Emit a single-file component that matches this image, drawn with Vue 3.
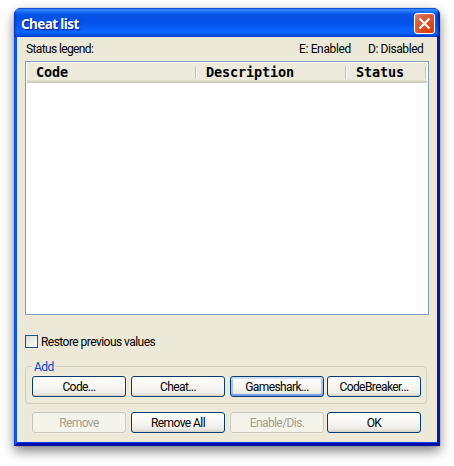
<script setup>
const columns = [
  { name: 'Code', cls: 'c-code' },
  { name: 'Description', cls: 'c-desc' },
  { name: 'Status', cls: 'c-status' },
]
const addButtons = [
  { label: 'Code...' },
  { label: 'Cheat...' },
  { label: 'Gameshark...', focused: true },
  { label: 'CodeBreaker...' },
]
const actions = [
  { label: 'Remove', disabled: true },
  { label: 'Remove All' },
  { label: 'Enable/Dis.', disabled: true },
  { label: 'OK' },
]
</script>

<template>
  <main class="screen">
    <section class="window">
      <header class="titlebar">
        <h1>Cheat list</h1>
        <button class="close" aria-label="Close">
          <svg width="21" height="21" viewBox="0 0 21 21">
            <path d="M5.5 5.5L15.5 15.5M15.5 5.5L5.5 15.5" stroke="#fff" stroke-width="2.2" />
          </svg>
        </button>
      </header>
      <div class="client">
        <div class="legend">
          <span class="l-status">Status legend:</span>
          <span class="l-enabled">E: Enabled</span>
          <span class="l-disabled">D: Disabled</span>
        </div>
        <div class="list">
          <div class="head">
            <span v-for="c in columns" :key="c.name" :class="c.cls">{{ c.name }}</span>
          </div>
        </div>
        <label class="restore">
          <i class="box"></i>
          <span>Restore previous values</span>
        </label>
        <fieldset class="group">
          <legend>Add</legend>
          <div class="row">
            <button v-for="b in addButtons" :key="b.label" class="btn" :class="{ focused: b.focused }">
              {{ b.label }}
            </button>
          </div>
        </fieldset>
        <div class="row actions">
          <button v-for="b in actions" :key="b.label" class="btn" :disabled="b.disabled">
            {{ b.label }}
          </button>
        </div>
      </div>
    </section>
  </main>
</template>

<style>
body {
  background: #fff;
  overflow: hidden;
}
</style>

<style scoped>
* {
  box-sizing: border-box;
}
.screen {
  width: 454px;
  height: 466px;
  padding: 8px 14px;
  overflow: hidden;
  background: #fff;
  font: 12px/14px Roboto, "Liberation Sans", Arial, sans-serif;
  color: #000;
}
.window {
  width: 426px;
  height: 438px;
  border-radius: 7px 7px 0 0;
  overflow: hidden;
  background: #0831d9;
  box-shadow: 0 0 1px rgba(0, 0, 0, 0.5), 0 5px 12px rgba(0, 0, 0, 0.5);
}
.titlebar {
  display: flex;
  justify-content: space-between;
  height: 29px;
  padding: 5px 5px 0 7px;
  background: linear-gradient(#0a48d8 0, #3a90ff 2px, #2478f8 3px, #0b57e8 6px, #0450e4 10px, #0453ee 16px, #0660fc 21px, #0765ff 25px, #0450e0 27px, #0138c8 29px);
  box-shadow: inset 2px 0 2px -1px #0030c0, inset -3px 0 2px -1px #0020a8;
}
h1 {
  margin: 0;
  padding-top: 2px;
  font: bold 13.5px/18px "Noto Sans", "Open Sans", sans-serif;
  letter-spacing: -0.6px;
  color: #fff;
  text-shadow: 1px 1px 1px #0a1883;
}
.close {
  width: 21px;
  height: 21px;
  padding: 0;
  border: 1px solid #fff;
  border-radius: 3px;
  overflow: hidden;
  background: radial-gradient(circle at 85% 90%, #d84000 0, #dc4c1c 40%, #d9603f 70%, #e58d75 100%);
}
.close svg {
  display: block;
  margin: -1px;
}
.client {
  width: 426px;
  height: 409px;
  padding: 5px 8px 10px;
  border: 3px solid #0036dc;
  border-top: 0;
  border-left-color: #0855e8;
  border-right-color: #0019b0;
  border-bottom-color: #0010a8;
  background: #ece9d8;
  box-shadow: inset 0 -1px #003ae8, inset -1px 0 #e6e6e0;
}
.legend {
  display: flex;
  height: 19px;
  padding-left: 1px;
}
.l-status {
  width: 273px;
  letter-spacing: -0.62px;
}
.l-enabled {
  width: 69px;
  letter-spacing: -0.35px;
}
.l-disabled {
  white-space: nowrap;
  letter-spacing: -0.42px;
}
.list {
  width: 404px;
  height: 254px;
  padding: 1px;
  border: 1px solid #7f9db9;
  background: #fff;
}
.head {
  display: flex;
  height: 20px;
  background: linear-gradient(#ebeadb 0 17px, #e2decd 17px 18px, #d6d2c2 18px 19px, #cbc7b8 19px);
  font: bold 13.5px/19px "DejaVu Sans Mono", monospace;
  letter-spacing: -0.13px;
}
.head span {
  position: relative;
  padding-left: 9px;
}
.head span::after {
  content: "";
  position: absolute;
  right: 0;
  top: 3px;
  width: 2px;
  height: 13px;
  background: linear-gradient(90deg, #c7c5b2 50%, #fff 50%);
}
.c-code {
  width: 170px;
}
.c-desc {
  width: 150px;
}
.c-status {
  width: 80px;
}
.restore {
  display: flex;
  align-items: center;
  height: 13px;
  margin-top: 20px;
  gap: 3px;
  letter-spacing: -0.54px;
}
.box {
  width: 13px;
  height: 13px;
  border: 1px solid #1d5281;
  background: linear-gradient(135deg, #dcdcd7, #fff);
}
.group {
  position: relative;
  width: 402px;
  height: 38px;
  margin: 18px 0 0;
  padding: 9px 0 0 6px;
  border: 1px solid #d0d0bf;
  border-radius: 4px;
  min-width: 0;
}
legend {
  position: absolute;
  left: 6px;
  top: -7px;
  padding: 0 2px;
  background: #ece9d8;
  color: #0046d5;
  letter-spacing: -0.5px;
}
.row {
  display: grid;
  grid-template-columns: 94px 94px 94px 94px;
  column-gap: 5px;
}
.row .btn:last-child {
  margin-left: -2px;
  margin-right: 2px;
}
.actions {
  margin: 8px 0 0 7px;
}
.btn {
  display: flex;
  align-items: center;
  justify-content: center;
  height: 21px;
  padding: 0;
  border: 1px solid #003c74;
  border-radius: 3px;
  background: linear-gradient(#fff, #f6f5f1 55%, #ecebe6 85%, #d6d0c5);
  box-shadow: 0 0 0 1px rgba(255, 255, 255, 0.22);
  font: inherit;
  letter-spacing: -0.58px;
  color: #000;
  white-space: nowrap;
}
.btn.focused {
  box-shadow: inset 0 2px #cee0ff, inset 0 -2px #7d9ce6, inset 2px 0 #a6c0f4, inset -2px 0 #a6c0f4;
}
.btn:disabled {
  border-color: #c9c7ba;
  background: #f5f4ea;
  color: #a1a192;
}
</style>
